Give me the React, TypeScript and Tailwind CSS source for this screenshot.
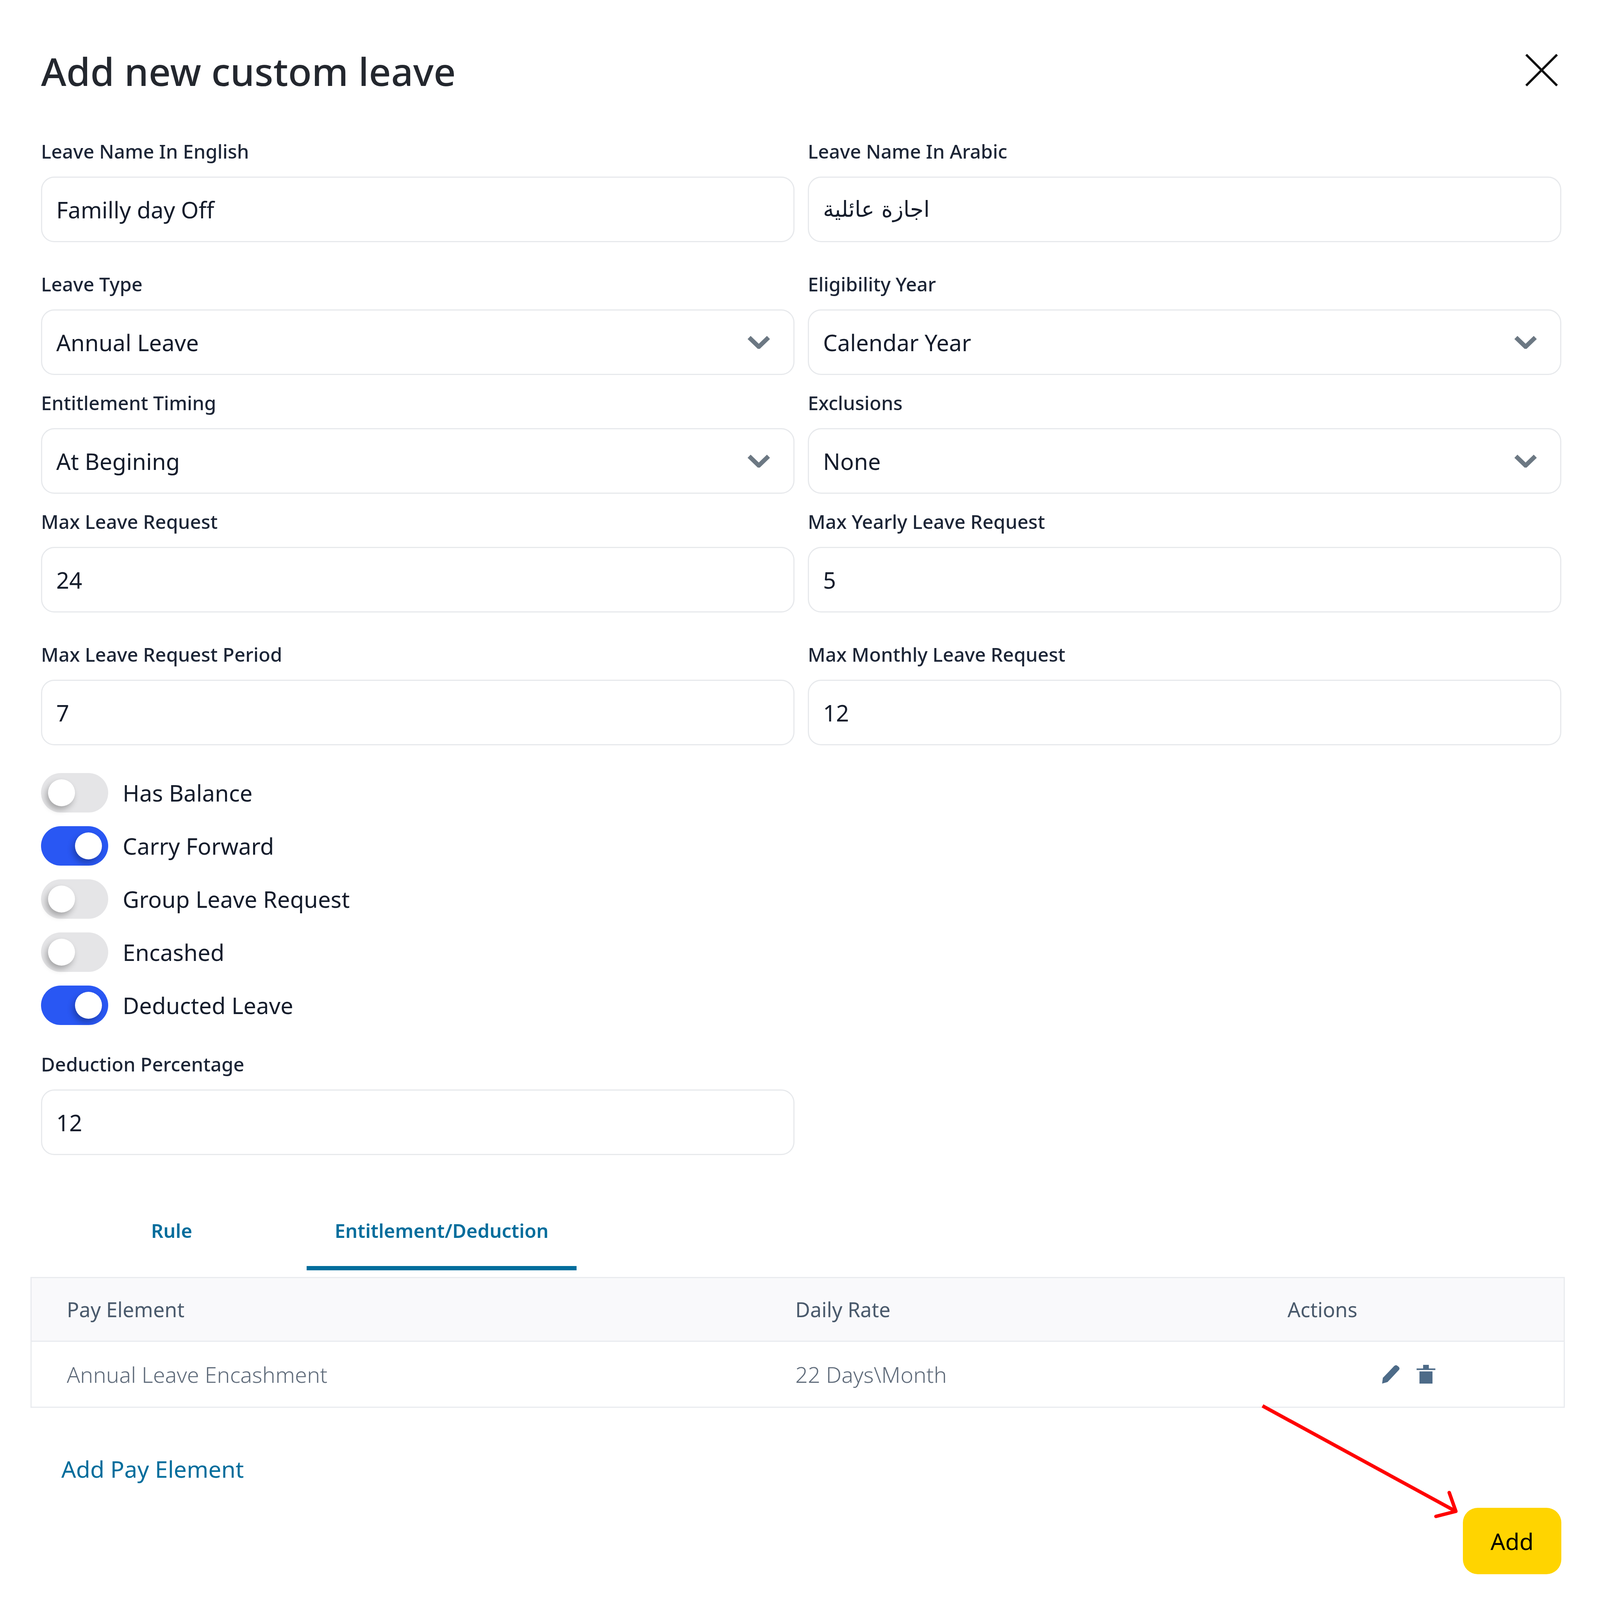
import React from 'react';

const Chevron = () => (
  <svg viewBox="0 0 87 50" className="w-[59px] h-[33px] shrink-0" fill="none" stroke="#6c7883" strokeWidth="17">
    <polyline points="6,6 43.5,42 81,6" />
  </svg>
);

interface FieldProps {
  label: string;
  value: string;
  select?: boolean;
  arabic?: boolean;
  className?: string;
}

const Field: React.FC<FieldProps> = ({ label, value, select, arabic, className }) => (
  <div className={className}>
    <div className="h-[60px] mb-[35px] leading-[60px] text-[49px] font-medium text-[#1c2536]">{label}</div>
    <div className="h-[168px] border-[3px] border-[#e7e9ec] rounded-[34px] pl-[36px] pr-[59px] flex items-center justify-between bg-white">
      {arabic ? (
        <span className="text-[56px] text-[#141c2b] font-['DejaVu_Sans',sans-serif]">{value}</span>
      ) : (
        <span className="text-[58px] text-[#141c2b]">{value}</span>
      )}
      {select && <Chevron />}
    </div>
  </div>
);

const Toggle: React.FC<{ label: string; on?: boolean }> = ({ label, on }) => (
  <div className="flex items-center h-[101px] mb-[35px]">
    <div
      className={
        on
          ? 'w-[172px] h-[101px] rounded-full bg-[#2957f3] flex items-center justify-end pr-[16px]'
          : 'w-[172px] h-[101px] rounded-full bg-[#e5e5e7] flex items-center pl-[18px]'
      }
    >
      <div className="w-[69px] h-[69px] rounded-full bg-white shadow-[-5px_9px_16px_rgba(0,0,0,0.28)]" />
    </div>
    <span className="ml-[37px] text-[58px] text-[#141c2b]">{label}</span>
  </div>
);

export default function App() {
  return (
    <div className="relative w-[4096px] h-[4096px] bg-white pl-[105px] pr-[99px] font-['Noto_Sans',sans-serif] overflow-hidden">
      {/* header */}
      <div className="h-[357px] pt-[117px] flex items-start justify-between">
        <h1 className="h-[130px] leading-[130px] text-[99px] font-medium text-[#23272e]">Add new custom leave</h1>
        <svg viewBox="0 0 126 126" className="w-[85px] h-[83px] mt-[21px] mr-[8px]" fill="none" stroke="#111" strokeWidth="9">
          <path d="M3 3 L123 123 M123 3 L3 123" />
        </svg>
      </div>

      {/* fields */}
      <div className="grid grid-cols-[1929px_1929px] gap-x-[34px]">
        <Field className="mb-[77px]" label="Leave Name In English" value="Familly day Off" />
        <Field className="mb-[77px]" label="Leave Name In Arabic" value="اجازة عائلية" arabic />
        <Field className="mb-[41px]" label="Leave Type" value="Annual Leave" select />
        <Field className="mb-[41px]" label="Eligibility Year" value="Calendar Year" select />
        <Field className="mb-[41px]" label="Entitlement Timing" value="At Begining" select />
        <Field className="mb-[41px]" label="Exclusions" value="None" select />
        <Field className="mb-[77px]" label="Max Leave Request" value="24" />
        <Field className="mb-[77px]" label="Max Yearly Leave Request" value="5" />
        <Field className="mb-[71px]" label="Max Leave Request Period" value="7" />
        <Field className="mb-[71px]" label="Max Monthly Leave Request" value="12" />
      </div>

      {/* toggles */}
      <Toggle label="Has Balance" />
      <Toggle label="Carry Forward" on />
      <Toggle label="Group Leave Request" />
      <Toggle label="Encashed" />
      <Toggle label="Deducted Leave" on />

      <Field className="w-[1929px] mt-[70px]" label="Deduction Percentage" value="12" />

      {/* tabs */}
      <div className="flex mt-[94px] -ml-[11px]">
        <div className="w-[691px] h-[201px] pt-[10px] border-b-[11px] border-transparent flex items-center justify-center text-[49px] font-semibold text-[#006d9c]">Rule</div>
        <div className="w-[691px] h-[201px] pt-[10px] border-b-[11px] border-[#006d9c] flex items-center justify-center text-[49px] font-semibold text-[#006d9c]">Entitlement/Deduction</div>
      </div>

      {/* table */}
      <div className="mt-[17px] -ml-[27px] -mr-[9px] border-[3px] border-[#e9ebef]">
        <div className="grid grid-cols-[1865px_1260px_1fr] pl-[90px] h-[163px] items-center bg-[#f9f9fb] border-b-[3px] border-[#e9ebef] text-[52px] text-[#4a5a6c]">
          <span>Pay Element</span>
          <span>Daily Rate</span>
          <span>Actions</span>
        </div>
        <div className="grid grid-cols-[1865px_1260px_1fr] pl-[90px] h-[166px] items-center text-[56px] font-light text-[#5f6b7a]">
          <span>Annual Leave Encashment</span>
          <span>22 Days\Month</span>
          <div className="flex items-center ml-[242px] gap-[43px]">
            <svg viewBox="0 0 67 72" className="w-[45px] h-[48px]" fill="#4d6b88">
              <path d="M0 72 L3 50 L46 5 Q52 -1 58 3 L64 8 Q69 13 65 19 L21 66 Z" />
            </svg>
            <svg viewBox="0 0 72 72" className="w-[49px] h-[48px]" fill="#4d6b88">
              <path d="M25 0 H47 V14 H72 V20 H0 V14 H25 Z M11 25 H61 V72 H11 Z" />
            </svg>
          </div>
        </div>
      </div>

      {/* footer */}
      <div className="mt-[116px] ml-[52px] h-[80px] leading-[80px] text-[59px] text-[#006d9c]">Add Pay Element</div>
      <div className="mt-[60px] flex justify-end">
        <button className="w-[252px] h-[170px] rounded-[38px] bg-[#ffd400] text-[59px] text-black">Add</button>
      </div>

      {/* red arrow annotation */}
      <svg viewBox="0 0 4096 4096" className="absolute inset-0 w-[4096px] h-[4096px] pointer-events-none" fill="none" stroke="#ff0000" strokeWidth="9">
        <path d="M3232 3599 L3725 3868" />
        <path d="M3710 3821 L3727 3869 L3676 3882" strokeLinecap="round" strokeLinejoin="round" />
      </svg>
    </div>
  );
}
